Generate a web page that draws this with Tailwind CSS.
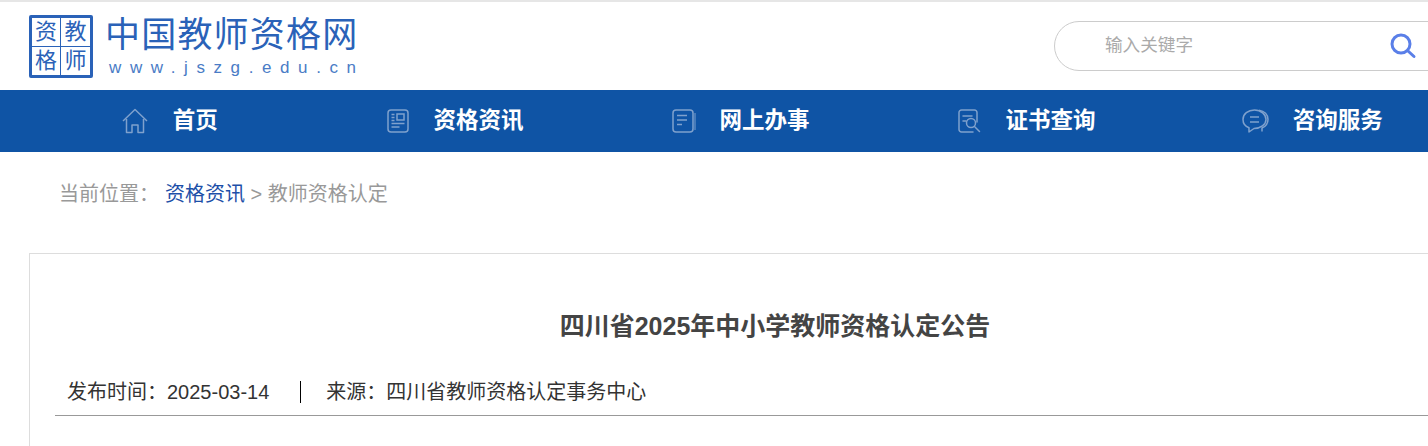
<!DOCTYPE html>
<html lang="zh-CN">
<head>
  <meta charset="UTF-8">
  <title>四川省2025年中小学教师资格认定公告 – 中国教师资格网</title>
  <script src="https://cdn.jsdelivr.net/npm/@tailwindcss/browser@4"></script>
</head>
<body class="bg-white overflow-hidden font-['Liberation_Sans','Noto_Sans_CJK_SC',sans-serif]">
  <div class="w-[1428px] h-[446px] overflow-hidden">
    <header class="h-[90px] border-t-2 border-[#e6e6e6] flex items-start">
      <a href="#" class="flex ml-[29px] mt-[13px]">
        <div class="w-[64px] h-[63px] border-[3px] border-[#2a62b8] rounded-[2px] grid grid-cols-2 grid-rows-2 text-[#2a62b8] text-[22px] leading-none">
          <span class="flex items-center justify-center border-r border-b border-[#2a62b8]">资</span>
          <span class="flex items-center justify-center border-b border-[#2a62b8]">教</span>
          <span class="flex items-center justify-center border-r border-[#2a62b8]">格</span>
          <span class="flex items-center justify-center">师</span>
        </div>
        <div class="ml-[12px] text-[#2a62b8]">
          <div class="text-[35px] leading-[40px] tracking-[1.2px] whitespace-nowrap">中国教师资格网</div>
          <div class="text-[17px] leading-[18px] mt-[4px] ml-[4px] tracking-[8.6px] text-[#4a7cc6] whitespace-nowrap">www.jszg.edu.cn</div>
        </div>
      </a>
      <div class="ml-auto -mr-[76px] mt-[19px] w-[450px] h-[50px] shrink-0 border border-[#ccc] rounded-[25px] flex items-center pl-[50px] pr-[86px]">
        <input type="text" placeholder="输入关键字" class="flex-1 -mt-[2px] outline-none text-[17.6px] text-[#333] placeholder:text-[#aaa]">
        <svg class="w-[28px] h-[28px]" viewBox="0 0 28 28" fill="none" stroke="#5a7fe8" stroke-width="3" stroke-linecap="round">
          <circle cx="12" cy="12" r="9"/>
          <path d="M19 19l6 5.500"/>
        </svg>
      </div>
    </header>

    <nav class="h-[62px] bg-[#0f54a5]">
      <ul class="ml-[27px] w-[1428px] grid grid-cols-5 h-full text-white text-[22.500px] font-bold">
        <li class="flex items-center justify-center gap-[25px]">
          <svg class="w-[26px] h-[26px]" viewBox="0 0 26 26" fill="none" stroke="#7fa1cd" stroke-width="1.500" stroke-linejoin="round">
            <path d="M1 13L13 1.500 25 13"/>
            <path d="M4.500 11v13.500h5.500v-7.500h6v7.500h5.500V11"/>
          </svg>
          <span>首页</span>
        </li>
        <li class="flex items-center justify-center gap-[24px]">
          <svg class="w-[22px] h-[24px]" viewBox="0 0 22 24" fill="none" stroke="#7fa1cd" stroke-width="1.500">
            <rect x="1" y="1" width="20" height="22" rx="3"/>
            <rect x="10" y="5" width="7" height="6"/>
            <path d="M4.500 5.500h3M4.500 8.500h3M4.500 11.500h3M4.500 14.500h13M4.500 18h8"/>
          </svg>
          <span>资格资讯</span>
        </li>
        <li class="flex items-center justify-center gap-[23px]">
          <svg class="w-[24px] h-[24px]" viewBox="0 0 24 24" fill="none" stroke="#7fa1cd" stroke-width="1.500">
            <rect x="1" y="1" width="20" height="22" rx="3"/>
            <path d="M5 6.500h10M5 11h10M5 15.500h5"/>
            <path d="M23 4v17" stroke-width="1"/>
          </svg>
          <span>网上办事</span>
        </li>
        <li class="flex items-center justify-center gap-[24px]">
          <svg class="w-[24px] h-[24px]" viewBox="0 0 24 24" fill="none" stroke="#7fa1cd" stroke-width="1.500" stroke-linecap="round">
            <path d="M19 13V3.500A2.500 2.500 0 0 0 16.500 1h-13A2.500 2.500 0 0 0 1 3.500v17A2.500 2.500 0 0 0 3.500 23H15"/>
            <path d="M5 7h9M5 12h3"/>
            <circle cx="13" cy="14" r="4.500"/>
            <path d="M16.500 17.500l5 5"/>
          </svg>
          <span>证书查询</span>
        </li>
        <li class="flex items-center justify-center gap-[24px]">
          <svg class="w-[27px] h-[24px]" viewBox="0 0 27 24" fill="none" stroke="#7fa1cd" stroke-width="1.500" stroke-linejoin="round">
            <path d="M12.500 1C6 1 1 5 1 10.500c0 4 2.500 7 6 8.300V23l5-3.500c6.500 0 12-4 12-9S19 1 12.500 1z"/>
            <path d="M17 1.200c5.500.8 9 4.500 9 9.300 0 4-2.500 7-6 8.500v3.500"/>
            <path d="M8 8h9M8 13h9"/>
          </svg>
          <span>咨询服务</span>
        </li>
      </ul>
    </nav>

    <div class="ml-[59px] mt-[28px] h-[28px] flex items-center text-[20px] text-[#999] whitespace-nowrap">
      <span>当前位置：</span>
      <a href="#" class="ml-[6px] text-[#1d4fa8]">资格资讯</a>
      <span class="ml-[5.500px]">&gt; 教师资格认定</span>
    </div>

    <article class="ml-[29px] mt-[45px] w-[1492px] min-h-[400px] border border-[#ddd] px-[25px] pt-[57px]">
      <h1 class="text-center text-[25px] leading-[30px] font-bold text-[#444]">四川省2025年中小学教师资格认定公告</h1>
      <div class="mt-[40px] pl-[12px] pb-[12px] border-b border-[#999] flex items-center text-[20px] leading-[22px] text-[#333]">
        <span>发布时间：2025-03-14</span>
        <span class="w-px h-[22px] bg-black ml-[31px] mr-[25px]"></span>
        <span>来源：四川省教师资格认定事务中心</span>
      </div>
    </article>
  </div>
</body>
</html>
